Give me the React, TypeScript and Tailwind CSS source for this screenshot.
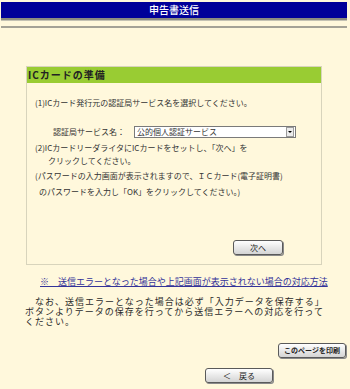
const btn =
  "flex items-center justify-center h-[15px] w-[68px] rounded-[3px] border border-[#5a5a5a] bg-gradient-to-b from-white to-[#d4d4d4] shadow-[1px_1px_0_#8a8a8a] text-[#222]";

const App = () => {
  return (
    <div className="w-[350px] h-[389px] bg-[#fff8dc] pt-[2px] font-['Noto_Sans_CJK_JP',sans-serif] text-[#333] overflow-hidden">
      {/* page title bar */}
      <div className="ml-[1px] w-[346px]">
        <div className="h-[16px] bg-[#000099] flex items-center justify-center text-white text-[10px] font-medium leading-none">
          申告書送信
        </div>
        <div className="h-[2px] bg-[#8c8c80]" />
        <div className="h-[1px] bg-[#c4c2b4]" />
        <div className="mt-[5px] h-[2px] bg-[#a4a296]" />
      </div>

      {/* IC card panel */}
      <div className="mt-[38px] ml-[26px] w-[296px] h-[199px] border border-[#d8d4bc] flex flex-col">
        <div className="h-[16px] bg-[#99cc33] flex items-center pl-[1px] text-[10px] font-bold tracking-[1px] text-[#222] leading-none">
          ICカードの準備
        </div>
        <div className="pl-[8px] text-[8px] leading-[12px] whitespace-nowrap">
          <p className="mt-[14px]">(1)ICカード発行元の認証局サービス名を選択してください。</p>
          <div className="mt-[17px] flex items-center h-[12px] pl-[18px]">
            <span className="w-[81px]">認証局サービス名：</span>
            <div className="w-[162px] h-[12px] border border-[#7a7a7a] bg-white flex items-center">
              <span className="flex-1 pl-[2px] leading-none">公的個人認証サービス</span>
              <span className="w-[8px] h-[10px] mr-[1px] border border-[#9a9a9a] bg-[#ececec] flex items-center justify-center">
                <span className="w-0 h-0 border-l-[2px] border-r-[2px] border-t-[2px] border-l-transparent border-r-transparent border-t-black" />
              </span>
            </div>
          </div>
          <div className="mt-[3px] leading-[13px]">
            <p>(2)ICカードリーダライタにICカードをセットし、「次へ」を</p>
            <p className="pl-[13px]">クリックしてください。</p>
          </div>
          <div className="mt-[1px] leading-[16px]">
            <p>(パスワードの入力画面が表示されますので、ＩＣカード(電子証明書)</p>
            <p className="pl-[4px]">のパスワードを入力し「OK」をクリックしてください。)</p>
          </div>
        </div>
        <div className="mt-auto mb-[9px] mr-[38px] flex justify-end">
          <button className="flex items-center justify-center h-[15px] w-[50px] rounded-[3px] border border-[#5a5a5a] bg-gradient-to-b from-white to-[#d4d4d4] shadow-[1px_1px_0_#8a8a8a] text-[#222] text-[8px] leading-none">
            次へ
          </button>
        </div>
      </div>

      {/* error help */}
      <a
        href="#"
        className="block mt-[11px] ml-[40px] text-[9px] leading-[12px] text-[#333399] underline whitespace-nowrap"
      >
        ※　送信エラーとなった場合や上記画面が表示されない場合の対応方法
      </a>
      <div className="mt-[9px] ml-[25px] text-[9px] tracking-[1px] leading-[10px] whitespace-nowrap text-[#2a2a2a]">
        <p>{"\u3000"}なお、送信エラーとなった場合は必ず「入力データを保存する」</p>
        <p>ボタンよりデータの保存を行ってから送信エラーへの対応を行って</p>
        <p>ください。</p>
      </div>

      <div className="mt-[16px] ml-[278px]">
        <button className={btn + " text-[7px] font-bold leading-none"}>このページを印刷</button>
      </div>
      <div className="mt-[10px] ml-[205px]">
        <button className={btn + " text-[8px] leading-none"}>＜　戻る</button>
      </div>
    </div>
  );
};

export default App;
